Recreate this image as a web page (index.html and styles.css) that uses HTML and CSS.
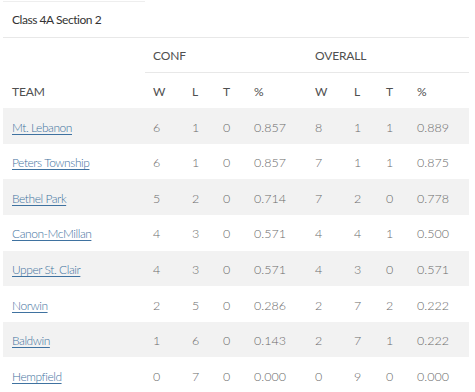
FILE: index.html
```html
<!DOCTYPE html>
<html>
<head>
<meta charset="utf-8">
<link rel="stylesheet" href="styles.css">
</head>
<body>
<table class="standings">
  <colgroup>
    <col class="c-team"><col class="c-w"><col class="c-l"><col class="c-t"><col class="c-p">
    <col class="c-w"><col class="c-l2"><col class="c-t"><col class="c-p2">
  </colgroup>
  <thead>
    <tr class="r-title">
      <th class="title">Class 4A Section 2</th>
      <th class="blank" colspan="8"></th>
    </tr>
    <tr class="r-group">
      <th class="nob"></th>
      <th class="grp" colspan="4">CONF</th>
      <th class="grp" colspan="4">OVERALL</th>
    </tr>
    <tr class="r-cols">
      <th>TEAM</th>
      <th>W</th><th>L</th><th>T</th><th>%</th>
      <th>W</th><th>L</th><th>T</th><th>%</th>
    </tr>
  </thead>
  <tbody>
    <tr><td><a href="#">Mt. Lebanon</a></td><td>6</td><td>1</td><td>0</td><td>0.857</td><td>8</td><td>1</td><td>1</td><td>0.889</td></tr>
    <tr><td><a href="#">Peters Township</a></td><td>6</td><td>1</td><td>0</td><td>0.857</td><td>7</td><td>1</td><td>1</td><td>0.875</td></tr>
    <tr><td><a href="#">Bethel Park</a></td><td>5</td><td>2</td><td>0</td><td>0.714</td><td>7</td><td>2</td><td>0</td><td>0.778</td></tr>
    <tr><td><a href="#">Canon-McMillan</a></td><td>4</td><td>3</td><td>0</td><td>0.571</td><td>4</td><td>4</td><td>1</td><td>0.500</td></tr>
    <tr><td><a href="#">Upper St. Clair</a></td><td>4</td><td>3</td><td>0</td><td>0.571</td><td>4</td><td>3</td><td>0</td><td>0.571</td></tr>
    <tr><td><a href="#">Norwin</a></td><td>2</td><td>5</td><td>0</td><td>0.286</td><td>2</td><td>7</td><td>2</td><td>0.222</td></tr>
    <tr><td><a href="#">Baldwin</a></td><td>1</td><td>6</td><td>0</td><td>0.143</td><td>2</td><td>7</td><td>1</td><td>0.222</td></tr>
    <tr><td><a href="#">Hempfield</a></td><td>0</td><td>7</td><td>0</td><td>0.000</td><td>0</td><td>9</td><td>0</td><td>0.000</td></tr>
  </tbody>
</table>
</body>
</html>
```

FILE: styles.css
```css
html, body {
  margin: 0;
  padding: 0;
  background: #fff;
}
body {
  padding: 1px 0 0 3px;
  font-family: Lato, "Open Sans", sans-serif;
}
.standings {
  border-collapse: collapse;
  table-layout: fixed;
  width: 466px;
}
.c-team { width: 142px; }
.c-w { width: 39px; }
.c-l { width: 31px; }
.c-l2 { width: 32px; }
.c-t { width: 31px; }
.c-p { width: 61px; }
.c-p2 { width: 60px; }

.standings th,
.standings td {
  height: 35.6px;
  padding: 2px 0 0 8px;
  box-sizing: border-box;
  text-align: left;
  vertical-align: middle;
  white-space: nowrap;
}
.standings th:first-child,
.standings td:first-child {
  padding-left: 9px;
}
.standings th {
  font-weight: 400;
  font-size: 12px;
  letter-spacing: -0.15px;
  color: #4f4f4f;
}
.r-title .title {
  font-size: 12px;
  letter-spacing: -0.45px;
  color: #333;
  border-top: 1px solid #eee;
  border-bottom: 1px solid #e8e8e8;
  padding-top: 1px;
}
.r-title .blank {
  border: none;
}
.r-group .grp {
  border-top: 1px solid #e8e8e8;
  border-bottom: 1px solid #e8e8e8;
}
.r-group .nob { border: none; }

.standings td {
  font-weight: 300;
  font-size: 12.5px;
  color: #6b6b6b;
}
.standings tbody tr:nth-child(odd) td {
  background: #f2f2f2;
}
.standings td a {
  font-size: 12px;
  letter-spacing: -0.45px;
  color: #3f72a0;
  text-decoration: underline;
  text-underline-offset: 2px;
  font-weight: 300;
}
```
